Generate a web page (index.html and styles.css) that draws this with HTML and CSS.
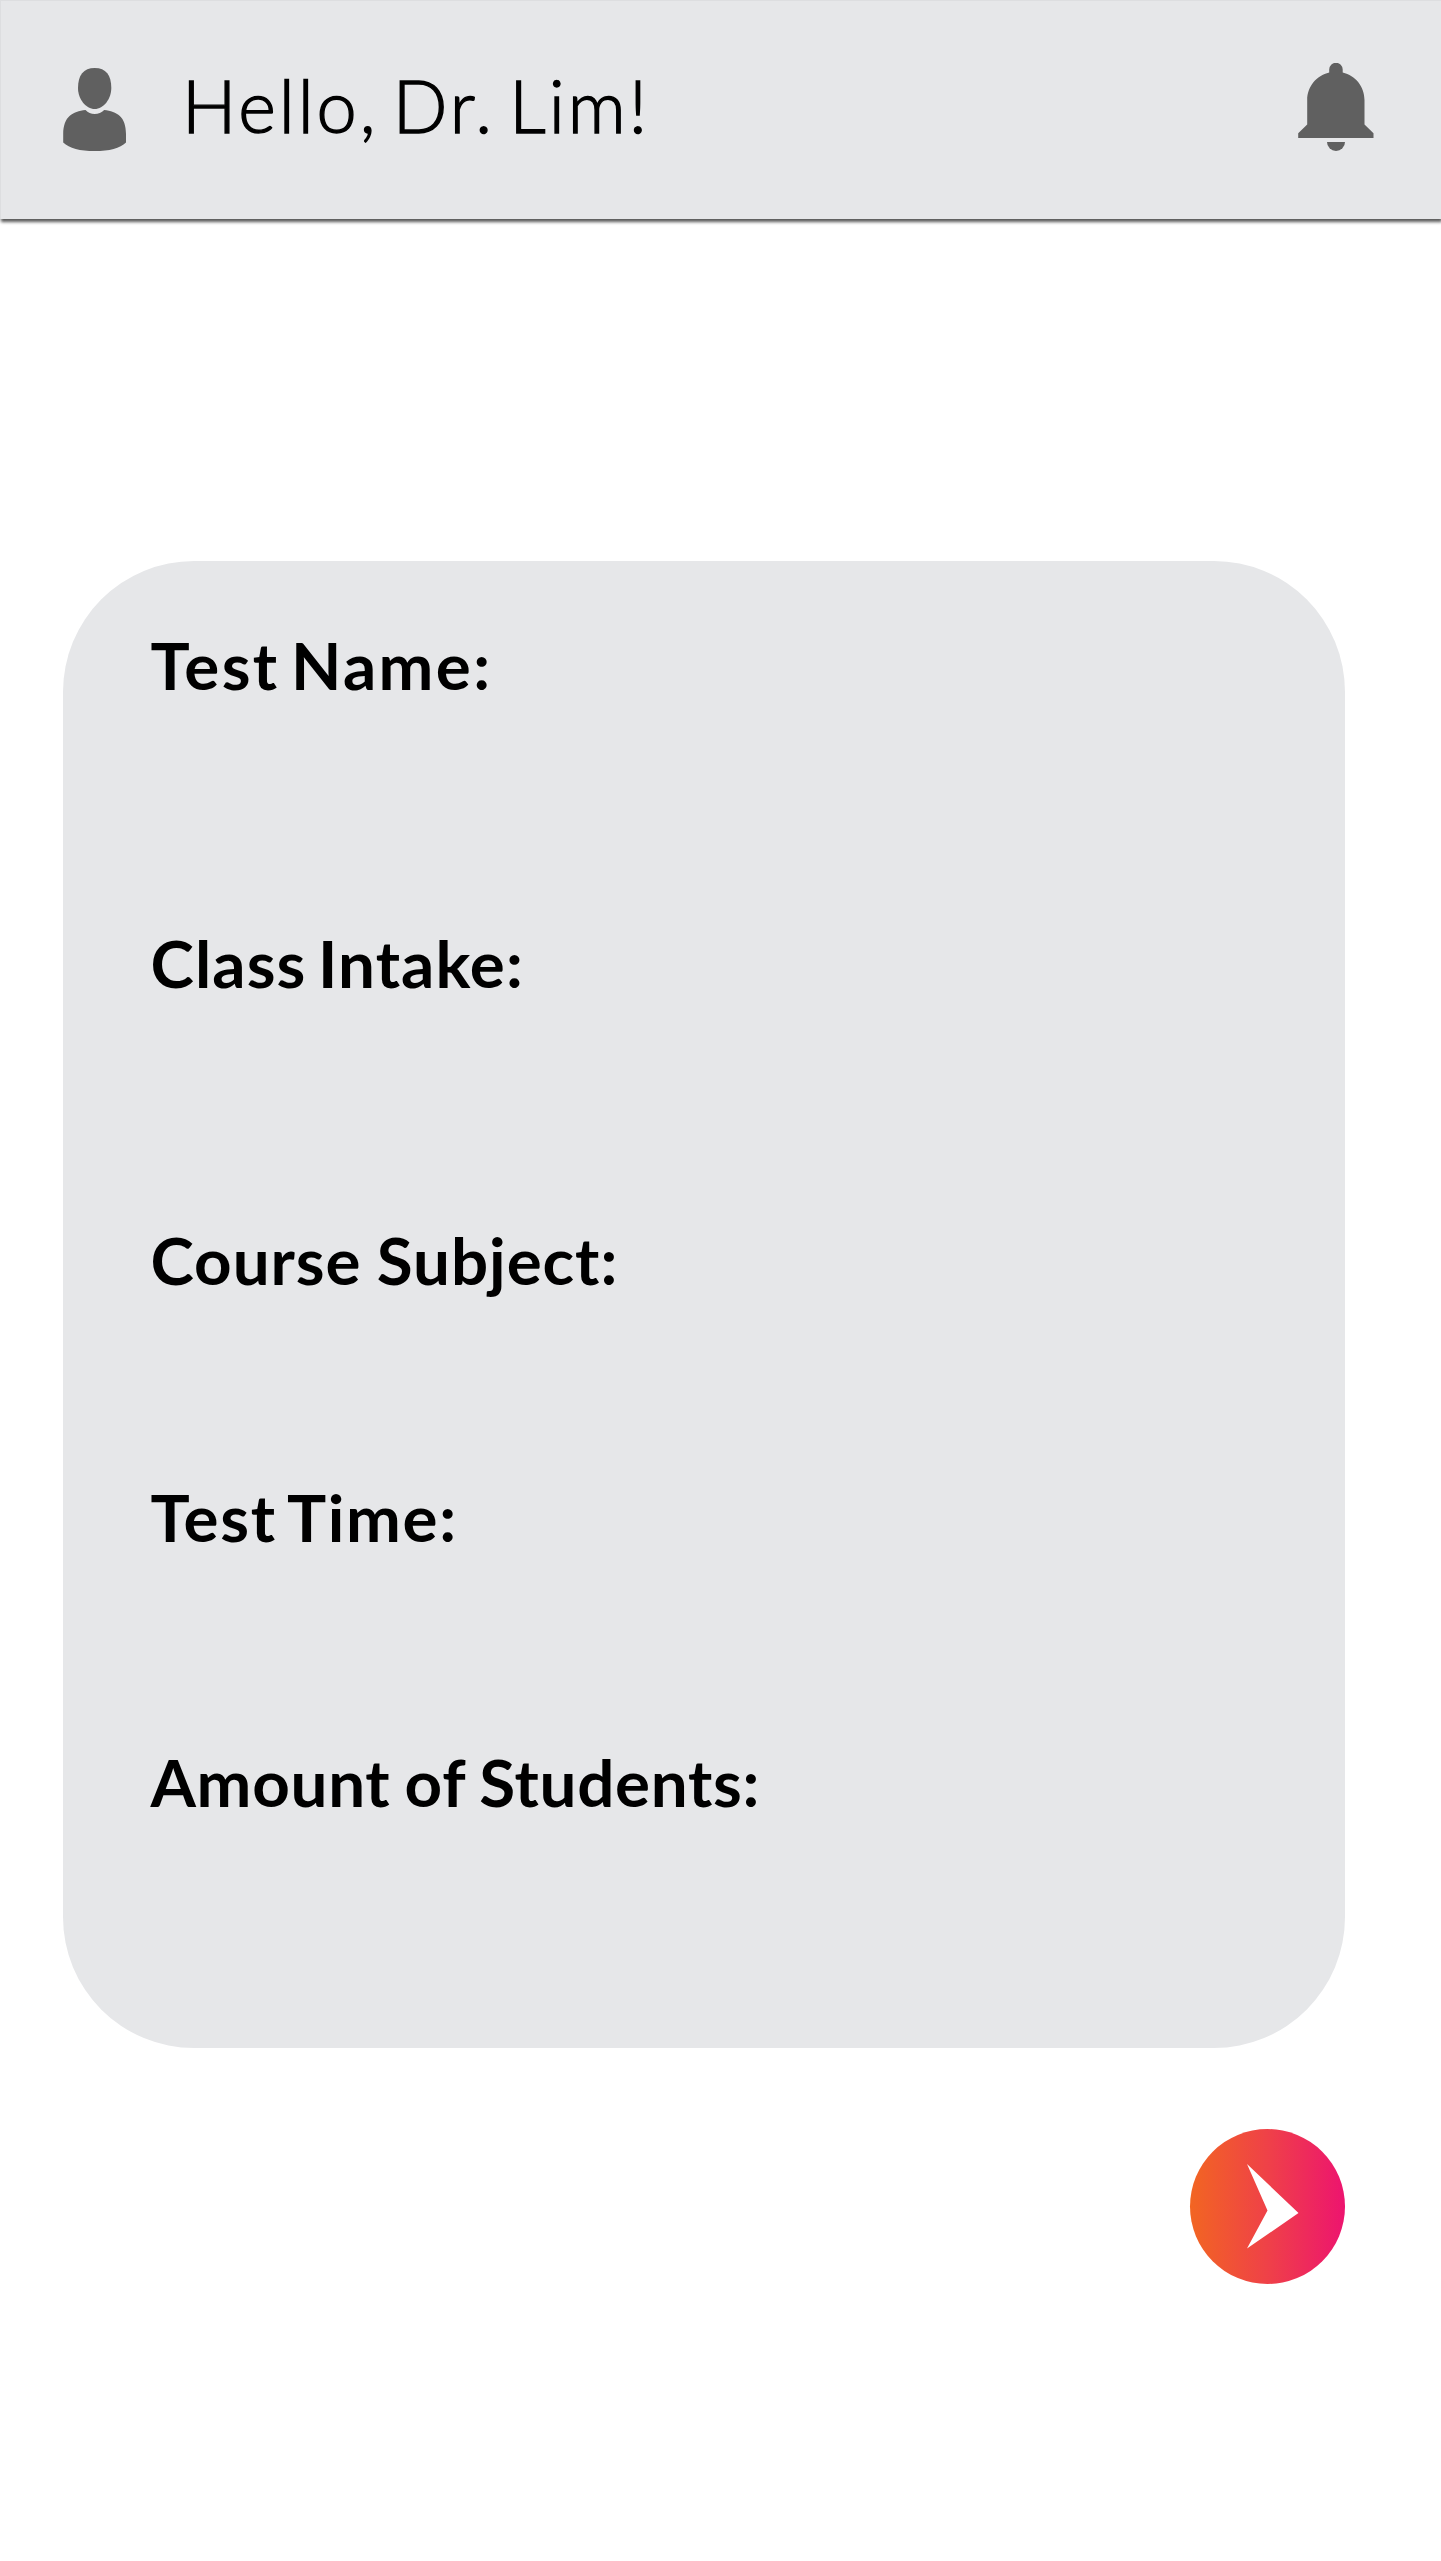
FILE: index.html
```html
<!DOCTYPE html>
<html lang="en">
<head>
<meta charset="utf-8">
<title>Test details</title>
<link rel="stylesheet" href="styles.css">
</head>
<body>
<header class="topbar">
  <svg class="icon-user" viewBox="63 68 63 83" aria-hidden="true">
    <path d="M94.700 68C106 68 111.300 75 111.300 88C111.300 99 103.500 109 94.700 109C85.800 109 78 99 78 88C78 75 83.500 68 94.700 68Z"/>
    <path d="M85.500 110C88 112.700 91 114 94.700 114C98.400 114 101.500 112.700 104.200 110C117 111.500 126 116.500 126 134V142.500C120 148.500 109.500 151 94.700 151C80 151 69.300 148.500 63.200 142.500V134C63.500 116.500 72.500 111.500 85.500 110Z"/>
  </svg>
  <h1 class="greeting">Hello, Dr. Lim!</h1>
  <svg class="icon-bell" viewBox="1298 63 76 88" aria-hidden="true">
    <path d="M1329.200 72.500V69.500A6.750 6.750 0 0 1 1342.700 69.500V72.500C1355.500 75.500 1364.500 86.500 1364.500 100V124.500L1373.500 133.300V138H1298.200V133.300L1307.200 124.500V100C1307.200 86.500 1316.500 75.500 1329.200 72.500Z"/>
    <path d="M1327 142H1345A9 9 0 0 1 1327 142Z"/>
  </svg>
</header>
<main class="content">
  <section class="card">
    <div class="field field-name">Test Name:</div>
    <div class="field field-intake">Class Intake:</div>
    <div class="field field-subject">Course Subject:</div>
    <div class="field field-time">Test Time:</div>
    <div class="field field-students">Amount of Students:</div>
  </section>
  <button class="next" aria-label="Next">
    <svg class="next-arrow" viewBox="0 0 155 155" aria-hidden="true">
      <path d="M57 35L108.500 84L57 119.500L77.500 81.500Z"/>
    </svg>
  </button>
</main>
</body>
</html>
```
FILE: styles.css
```css
* {
  box-sizing: border-box;
}

body {
  margin: 0;
  min-height: 2561px;
  background: #fff;
  color: #000;
  font-family: Lato, "Open Sans", sans-serif;
  overflow-x: hidden;
}

.topbar {
  display: flex;
  align-items: flex-start;
  width: 1441px;
  height: 219px;
  padding: 0 67px 0 62px;
  border: solid #dddee0;
  border-width: 1px 0 0 1px;
  background: #e6e7e9;
  box-shadow: 1px 3px 3px rgba(0, 0, 0, 0.65);
}

.icon-user {
  width: 63px;
  height: 83px;
  margin-top: 67px;
  fill: #606060;
}

.greeting {
  margin: 61px 0 0 56px;
  font-size: 72px;
  font-weight: 300;
  line-height: 86px;
  letter-spacing: 3px;
  word-spacing: -8.3px;
  white-space: nowrap;
  -webkit-text-stroke: 1.4px #000;
}

.icon-bell {
  width: 76px;
  height: 88px;
  margin: 62px 0 0 auto;
  fill: #606060;
}

.content {
  display: flex;
  flex-direction: column;
  width: 1282px;
  margin: 342px 0 0 63px;
}

.card {
  display: grid;
  grid-template-rows: 298px 297px 257px 265px 80px;
  height: 1487px;
  padding: 64px 0 0 87.5px;
  border-radius: 131px;
  background: #e6e7e9;
}

.field {
  font-size: 65.5px;
  font-weight: 700;
  line-height: 80px;
  white-space: nowrap;
}

.field-name {
  letter-spacing: 2.4px;
  word-spacing: -7px;
}

.field-intake {
  letter-spacing: 1.1px;
  word-spacing: -5.4px;
}

.field-subject {
  letter-spacing: 0.95px;
  word-spacing: -1.6px;
}

.field-time {
  letter-spacing: 1.7px;
  word-spacing: -5.5px;
}

.field-students {
  letter-spacing: 0.7px;
  word-spacing: -2.4px;
}

.next {
  align-self: flex-end;
  width: 155px;
  height: 155px;
  margin-top: 81px;
  padding: 0;
  border: 0;
  border-radius: 50%;
  background: linear-gradient(90deg, #f26522, #ef4148 50%, #ed146f);
}

.next-arrow {
  display: block;
  width: 155px;
  height: 155px;
  fill: #fff;
}
```
